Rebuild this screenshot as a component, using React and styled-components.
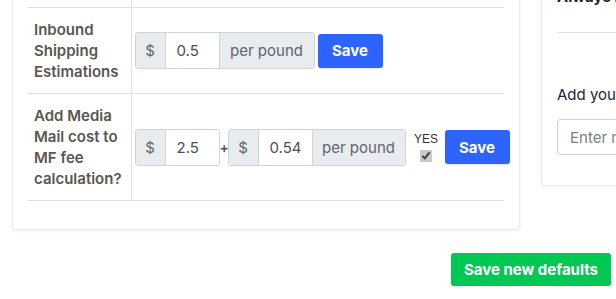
import styled, { createGlobalStyle } from "styled-components";

const GlobalStyle = createGlobalStyle`
  html, body {
    margin: 0;
    background: #fff;
    overflow: hidden;
  }
  body {
    font-family: Inter, "Noto Sans", sans-serif;
    color: #495057;
  }
`;

export default function App() {
  return (
    <>
      <GlobalStyle />
      <Page>
        <Columns>
          <LeftCard>
            <Table>
              <colgroup>
                <col style={{ width: 103 }} />
                <col />
              </colgroup>
              <tbody>
                <StubRow>
                  <Label />
                  <Value />
                </StubRow>
                <Row>
                  <Label>Inbound Shipping Estimations</Label>
                  <Value>
                    <Controls>
                      <InputGroup>
                        <Addon>$</Addon>
                        <Field defaultValue="0.5" />
                        <Addon $w={94} $end>per pound</Addon>
                      </InputGroup>
                      <SaveButton>Save</SaveButton>
                    </Controls>
                  </Value>
                </Row>
                <Row>
                  <Label>Add Media Mail cost to MF fee calculation?</Label>
                  <Value>
                    <Controls>
                      <InputGroup>
                        <Addon>$</Addon>
                        <Field defaultValue="2.5" />
                      </InputGroup>
                      <Plus>+</Plus>
                      <InputGroup>
                        <Addon>$</Addon>
                        <Field defaultValue="0.54" />
                        <Addon $w={92} $end>per pound</Addon>
                      </InputGroup>
                      <YesBox>
                        <span>YES</span>
                        <Check type="checkbox" defaultChecked />
                      </YesBox>
                      <SaveButton>Save</SaveButton>
                    </Controls>
                  </Value>
                </Row>
              </tbody>
            </Table>
          </LeftCard>

          <RightCard>
            <CardTitle>Always include notes</CardTitle>
            <Divider />
            <FieldLabel>Add your note</FieldLabel>
            <TextInput placeholder="Enter note here" />
          </RightCard>
        </Columns>

        <Footer>
          <DefaultsButton>Save new defaults</DefaultsButton>
        </Footer>
      </Page>
    </>
  );
}

const Page = styled.div`
  margin-top: -20px;
  padding-left: 12px;
  display: flex;
  flex-direction: column;
`;

const Columns = styled.div`
  display: flex;
  align-items: flex-start;
  gap: 21px;
`;

const LeftCard = styled.div`
  width: 508px;
  box-sizing: border-box;
  flex-shrink: 0;
  background: #fff;
  border: 1px solid #ececec;
  border-radius: 3px;
  box-shadow: 0 1px 3px rgba(0, 0, 0, 0.06);
  padding: 11px 15px 28px;
`;

const Table = styled.table`
  width: 476px;
  table-layout: fixed;
  border-collapse: collapse;
`;

const Row = styled.tr`
  border-bottom: 1px solid #dee2e6;
`;

const Label = styled.td`
  padding: 11px 6px;
  border-right: 1px solid #dee2e6;
  font-size: 15px;
  font-weight: 600;
  line-height: 21px;
  color: #5b5650;
  vertical-align: middle;
`;

const Value = styled.td`
  padding: 11px 6px 11px 3px;
  vertical-align: middle;
  overflow: visible;
`;

const StubRow = styled.tr`
  border-bottom: 1px solid #dee2e6;

  td {
    padding: 0;
    height: 15px;
  }
`;

const Controls = styled.div`
  display: flex;
  align-items: center;
  white-space: nowrap;
`;

const InputGroup = styled.div`
  display: flex;
  flex-shrink: 0;
  height: 37px;
  border: 1px solid #ced4da;
  border-radius: 3px;
  box-sizing: border-box;
  overflow: hidden;
`;

const Addon = styled.span`
  display: flex;
  align-items: center;
  justify-content: center;
  width: ${(p) => p.$w || 29}px;
  background: #e9ecef;
  color: #5f6670;
  font-size: 15px;
  border-right: ${(p) => (p.$end ? "none" : "1px solid #ced4da")};
  border-left: ${(p) => (p.$end ? "1px solid #ced4da" : "none")};
`;

const Field = styled.input`
  width: 53px;
  box-sizing: border-box;
  border: none;
  outline: none;
  padding: 0 11px;
  font-family: inherit;
  font-size: 15px;
  color: #495057;
  background: #fff;
`;

const Plus = styled.span`
  width: 8px;
  flex-shrink: 0;
  text-align: center;
  font-size: 14px;
  font-weight: 600;
  color: #555;
`;

const YesBox = styled.label`
  display: flex;
  flex-shrink: 0;
  flex-direction: column;
  align-items: center;
  width: 23px;
  margin: 0 4px 0 9px;
  font-family: "Liberation Sans", Arial, sans-serif;
  font-size: 12px;
  line-height: 14px;
  color: #333;
`;

const Check = styled.input`
  width: 12px;
  height: 12px;
  margin: 4px 0 0;
  accent-color: #c8c8c8;
`;

const SaveButton = styled.button`
  flex-shrink: 0;
  margin-left: 3px;
  width: 65px;
  height: 34px;
  border: none;
  border-radius: 3px;
  background: #2d64ff;
  color: #fff;
  font-family: inherit;
  font-size: 15px;
  font-weight: 700;
  box-shadow: 0 1px 2px rgba(0, 0, 0, 0.1);
`;

const RightCard = styled.div`
  width: 300px;
  flex-shrink: 0;
  box-sizing: border-box;
  background: #fff;
  border: 1px solid #ececec;
  border-radius: 3px;
  box-shadow: 0 1px 3px rgba(0, 0, 0, 0.06);
  padding: 5px 15px 30px;
`;

const CardTitle = styled.div`
  font-size: 15px;
  font-weight: 700;
  line-height: 21px;
  color: #222;
`;

const Divider = styled.hr`
  border: none;
  border-top: 1px solid #dee2e6;
  margin: 25px 0 0;
`;

const FieldLabel = styled.div`
  margin-top: 51px;
  font-size: 15px;
  line-height: 21px;
  color: #1f2433;
`;

const TextInput = styled.input`
  display: block;
  margin-top: 14px;
  width: 100%;
  height: 36px;
  box-sizing: border-box;
  border: 1px solid #ced4da;
  border-radius: 3px;
  padding: 0 12px;
  font-family: inherit;
  font-size: 15px;
  &::placeholder {
    color: #7a7f86;
  }
`;

const Footer = styled.div`
  display: flex;
  justify-content: flex-end;
  padding: 23px 5px 0 0;
`;

const DefaultsButton = styled.button`
  width: 160px;
  height: 33px;
  border: none;
  border-radius: 3px;
  background: #00c853;
  color: #fff;
  font-family: inherit;
  font-size: 15px;
  font-weight: 700;
  box-shadow: 0 1px 2px rgba(0, 0, 0, 0.1);
`;
